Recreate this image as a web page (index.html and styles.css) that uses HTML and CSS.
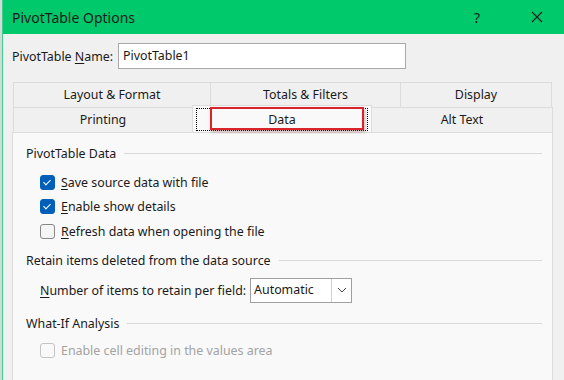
FILE: index.html
```html
<!DOCTYPE html>
<html lang="en">
<head>
    <meta charset="UTF-8">
    <meta name="viewport" content="width=device-width, initial-scale=1.0">
    <title>PivotTable Options</title>
    <link rel="stylesheet" href="styles.css">
</head>
<body>
    <div class="window">
        <div class="titlebar">
            <span class="title">PivotTable Options</span>
            <span class="help">?</span>
            <span class="close">
                <svg width="12" height="12" viewBox="0 0 12 12"><path d="M1 1 L11 11 M11 1 L1 11" stroke="#1b1b1b" stroke-width="1.1" fill="none"/></svg>
            </span>
        </div>

        <div class="content">
            <div class="name-row">
                <label>PivotTable <u>N</u>ame:</label>
                <div class="textbox">PivotTable1</div>
            </div>

            <div class="tabs">
                <div class="tab-row">
                    <div class="tab w1">Layout &amp; Format</div>
                    <div class="tab w2">Totals &amp; Filters</div>
                    <div class="tab w3">Display</div>
                </div>
                <div class="tab-row">
                    <div class="tab w4">Printing</div>
                    <div class="tab w5 selected">
                        <span class="focus">Data</span>
                        <span class="highlight"></span>
                    </div>
                    <div class="tab w6">Alt Text</div>
                </div>
            </div>

            <div class="panel">
                <div class="group-title"><span>PivotTable Data</span></div>
                <div class="check-row first">
                    <span class="box checked"></span>
                    <span><u>S</u>ave source data with file</span>
                </div>
                <div class="check-row">
                    <span class="box checked"></span>
                    <span><u>E</u>nable show details</span>
                </div>
                <div class="check-row">
                    <span class="box"></span>
                    <span><u>R</u>efresh data when opening the file</span>
                </div>

                <div class="group-title retain"><span>Retain items deleted from the data source</span></div>
                <div class="combo-row">
                    <span><u>N</u>umber of items to retain per field:</span>
                    <div class="combo">
                        <span class="combo-value">Automatic</span>
                        <span class="combo-btn">
                            <svg width="10" height="6" viewBox="0 0 10 6"><path d="M1 1 L5 5 L9 1" stroke="#444" stroke-width="1" fill="none"/></svg>
                        </span>
                    </div>
                </div>

                <div class="group-title whatif"><span>What-If Analysis</span></div>
                <div class="check-row disabled">
                    <span class="box"></span>
                    <span>Enable cell editing in the values area</span>
                </div>
            </div>
        </div>
    </div>
</body>
</html>
```

FILE: styles.css
```css
body {
    margin: 0;
    background: #d4d8d6;
    font-family: "Noto Sans", "Open Sans", sans-serif;
    font-size: 12.4px;
    color: #1a1a1a;
    overflow: hidden;
}
u {
    text-decoration: underline;
    text-underline-offset: 2px;
}
.window {
    margin-left: 2px;
    height: 380px;
    border-left: 1px solid #3fcf8f;
    background: #f0f0f0;
}
.titlebar {
    height: 34px;
    background: #00c96b;
    display: flex;
    align-items: center;
    padding-left: 9px;
}
.title {
    font-size: 14px;
    color: #1b1b1b;
    flex: 1;
}
.help {
    font-size: 14px;
    width: 20px;
    text-align: center;
    margin-right: 40px;
}
.close {
    width: 20px;
    margin-right: 17px;
    display: flex;
    justify-content: center;
}
.content {
    padding: 9px 0 0 9px;
}
.name-row {
    display: flex;
    align-items: center;
    height: 26px;
}
.name-row label {
    width: 106px;
}
.textbox {
    width: 282px;
    height: 24px;
    line-height: 24px;
    border: 1px solid #a9a9a9;
    background: white;
    padding-left: 4px;
}
.tabs {
    margin-top: 13px;
    margin-left: 1px;
    width: 540px;
}
.tab-row {
    display: flex;
    height: 25px;
}
.tab {
    background: #f0f0f0;
    border: 1px solid #dcdcdc;
    border-bottom: none;
    box-sizing: border-box;
    text-align: center;
    line-height: 24px;
    margin-left: -1px;
}
.tab:first-child {
    margin-left: 0;
}
.w1 { width: 198px; }
.w2 { width: 191px; }
.w3 { width: 152px; }
.w4 { width: 180px; }
.w5 { width: 180px; }
.w6 { width: 182px; }
.tab.selected {
    position: relative;
    background: #f9f9f9;
    height: 27px;
    margin-top: -2px;
    border-bottom: none;
    z-index: 1;
    padding: 2px 3px 0 3px;
}
.focus {
    display: block;
    height: 23px;
    line-height: 21px;
    border: 1px dotted #000;
    box-sizing: border-box;
}
.highlight {
    position: absolute;
    left: 17px;
    top: 1px;
    width: 154px;
    height: 23px;
    border: 2px solid #d8232a;
    box-sizing: border-box;
    box-shadow: 1px 2px 3px rgba(120, 40, 40, 0.35);
}
.panel {
    width: 541px;
    height: 260px;
    margin-left: 0;
    background: #f9f9f9;
    border: 1px solid #dcdcdc;
    box-sizing: border-box;
    padding: 10px 10px 0 13px;
}
.group-title {
    display: flex;
    align-items: center;
    height: 20px;
}
.group-title::after {
    content: "";
    flex: 1;
    height: 1px;
    background: #d9d9d9;
    margin-left: 8px;
}
.check-row {
    display: flex;
    align-items: center;
    height: 24.5px;
    padding-left: 14px;
}
.check-row.first {
    margin-top: 7px;
}
.box {
    width: 15px;
    height: 15px;
    box-sizing: border-box;
    border: 1px solid #868686;
    border-radius: 3px;
    background: #f5f5f5;
    margin-right: 6px;
    position: relative;
}
.box.checked {
    background: #005fb8;
    border-color: #005fb8;
}
.box.checked::after {
    content: "";
    position: absolute;
    left: 4px;
    top: 2px;
    width: 3px;
    height: 6px;
    border: solid white;
    border-width: 0 1px 1px 0;
    transform: rotate(45deg);
}
.retain {
    margin-top: 7px;
}
.combo-row {
    display: flex;
    align-items: center;
    margin-top: 7px;
    padding-left: 14px;
}
.combo {
    margin-left: 4px;
    width: 102px;
    height: 25px;
    box-sizing: border-box;
    border: 1px solid #a0a0a0;
    background: white;
    display: flex;
}
.combo-value {
    flex: 1;
    line-height: 22px;
    padding-left: 3px;
}
.combo-btn {
    width: 19px;
    border-left: 1px solid #d0d0d0;
    display: flex;
    align-items: center;
    justify-content: center;
}
.whatif {
    margin-top: 11px;
}
.check-row.disabled {
    margin-top: 5px;
    color: #a3a3a3;
}
.check-row.disabled .box {
    border-color: #c4c4c4;
    background: #f9f9f9;
}
```
